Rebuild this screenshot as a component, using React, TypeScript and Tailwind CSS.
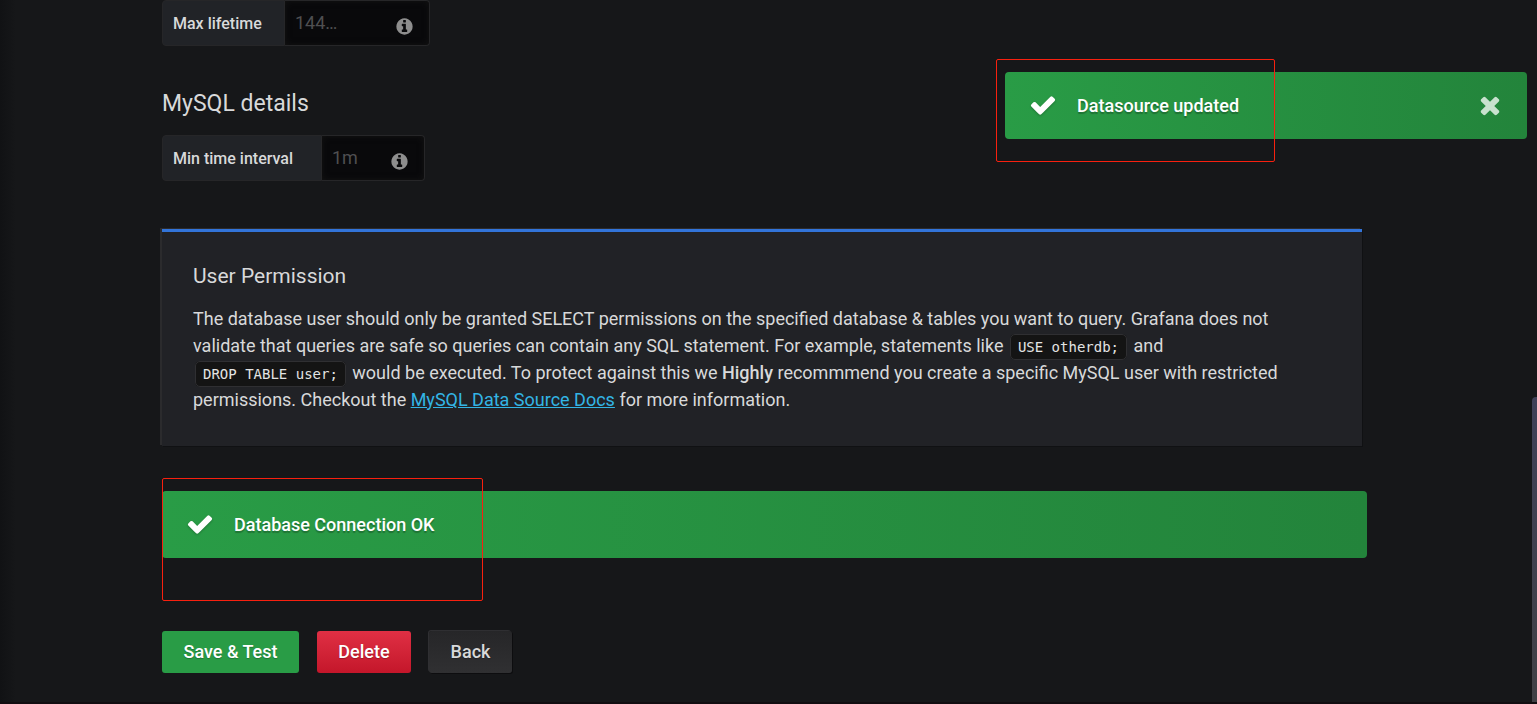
import React from "react";

type IconProps = { className?: string };

const CheckIcon = ({ className }: IconProps) => (
  <svg viewBox="0 0 1792 1792" fill="currentColor" aria-hidden="true" className={className}>
    <path d="M1671 566q0 40-28 68l-724 724-136 136q-28 28-68 28t-68-28l-136-136-362-362q-28-28-28-68t28-68l136-136q28-28 68-28t68 28l294 295 656-657q28-28 68-28t68 28l136 136q28 28 28 68z" />
  </svg>
);

const CloseIcon = ({ className }: IconProps) => (
  <svg viewBox="0 0 1792 1792" fill="currentColor" aria-hidden="true" className={className}>
    <path d="M1490 1322q0 40-28 68l-136 136q-28 28-68 28t-68-28l-294-294-294 294q-28 28-68 28t-68-28l-136-136q-28-28-28-68t28-68l294-294-294-294q-28-28-28-68t28-68l136-136q28-28 68-28t68 28l294 294 294-294q28-28 68-28t68 28l136 136q28 28 28 68t-28 68l-294 294 294 294q28 28 28 68z" />
  </svg>
);

const InfoIcon = ({ className }: IconProps) => (
  <svg viewBox="0 0 1792 1792" fill="currentColor" aria-hidden="true" className={className}>
    <path d="M1152 1376v-160q0-14-9-23t-23-9h-96v-512q0-14-9-23t-23-9h-320q-14 0-23 9t-9 23v160q0 14 9 23t23 9h96v320h-96q-14 0-23 9t-9 23v160q0 14 9 23t23 9h448q14 0 23-9t9-23zm-128-896v-160q0-14-9-23t-23-9h-192q-14 0-23 9t-9 23v160q0 14 9 23t23 9h192q14 0 23-9t9-23zm640 416q0 209-103 385.5t-279.5 279.5-385.5 103-385.5-103-279.5-279.5-103-385.5 103-385.5 279.5-279.5 385.5-103 385.5 103 279.5 279.5 103 385.5z" />
  </svg>
);

type FieldProps = {
  id: string;
  label: string;
  placeholder: string;
  labelClass: string;
  inputClass: string;
};

const Field = ({ id, label, placeholder, labelClass, inputClass }: FieldProps) => (
  <div className="flex h-[46px]">
    <label
      htmlFor={id}
      className={`flex items-center rounded-l border border-[#262628] bg-[#212327] pt-[2px] pl-[10px] text-base font-medium text-[#d8d9da] ${labelClass}`}
    >
      {label}
    </label>
    <div className={`relative ${inputClass}`}>
      <input
        id={id}
        type="text"
        placeholder={placeholder}
        className="h-full w-full rounded-r border border-l-0 border-[#262628] bg-[#09090b] pr-10 pb-[2px] pl-[10px] text-lg text-[#d8d9da] shadow-[inset_0_0_6px_#141414] outline-none placeholder:text-[#4f4f51]"
      />
      <InfoIcon className="absolute top-[17px] right-4 size-[19px] text-[#8e8e8e]" />
    </div>
  </div>
);

const Code = ({ children }: { children: React.ReactNode }) => (
  <code className="mx-[2px] rounded-[5px] border border-[#2f2f32] bg-[#141414] px-[7px] py-1 align-baseline font-['DejaVu_Sans_Mono',monospace] text-sm whitespace-nowrap text-[#e3e3e3]">
    {children}
  </code>
);

type AlertProps = { title: string; onClose?: () => void };

const Alert = ({ title, onClose }: AlertProps) => (
  <div
    role="status"
    className="flex h-[67px] items-center rounded bg-linear-to-r from-[#299c46] to-[#23843b] pr-[23px] pl-6 text-white [text-shadow:0_2px_1px_rgba(0,0,0,0.25)]"
  >
    <CheckIcon className="mb-[2px] size-7 drop-shadow-[0_1px_1px_rgba(0,0,0,0.25)]" />
    <div className="ml-5 flex-1 text-lg font-medium">{title}</div>
    {onClose && (
      <button type="button" aria-label="Close" onClick={onClose} className="mb-[2px] text-[#c8e1ce]">
        <CloseIcon className="size-7" />
      </button>
    )}
  </div>
);

export default function App() {
  const [toast, setToast] = React.useState(true);
  const button = "flex h-[42px] items-center justify-center rounded-[3px] text-lg font-medium [text-shadow:0_1px_1px_rgba(0,0,0,0.25)]";

  return (
    <div className="relative min-h-screen overflow-hidden border-b-2 border-[#120d11] bg-[#161719] font-[Roboto,sans-serif] text-[#d8d9da]">
      <div className="absolute inset-y-0 left-0 w-4 bg-linear-to-r from-[#111214] to-[#161719]" />

      <main className="relative pr-[170px] pb-[29px] pl-[162px]">
        <Field id="max-lifetime" label="Max lifetime" placeholder="144…" labelClass="w-[123px]" inputClass="w-[145px]" />

        <h3 className="mt-[42px] text-[23px] leading-8">MySQL details</h3>
        <div className="mt-[15px]">
          <Field id="min-interval" label="Min time interval" placeholder="1m" labelClass="w-[160px]" inputClass="w-[103px]" />
        </div>

        <section className="mt-12 mr-[5px] border-t-[3px] border-[#3274d9] bg-[#212226] pt-[29px] pr-[60px] pb-[33px] pl-[31px] shadow-[-2px_-1px_0_0_#2b2b2d,1px_1px_0_0_#101113]">
          <h5 className="text-[21px] leading-[30px]">User Permission</h5>
          <p className="mt-[14px] text-lg leading-[27px]">
            The database user should only be granted SELECT permissions on the specified database &amp; tables you want
            to query. Grafana does not validate that queries are safe so queries can contain any SQL statement. For
            example, statements like <Code>USE otherdb;</Code> and <Code>DROP TABLE user;</Code> would be executed. To
            protect against this we <strong className="font-medium">Highly</strong> recommmend you create a specific
            MySQL user with restricted permissions. Checkout the{" "}
            <a href="#docs" className="text-[#33b5e5] underline">
              MySQL Data Source Docs
            </a>{" "}
            for more information.
          </p>
        </section>

        <div className="relative mt-[45px]">
          <Alert title="Database Connection OK" />
          <div className="pointer-events-none absolute -top-[13px] left-0 h-[123px] w-[321px] rounded-[2px] border border-[#f8200f]" />
        </div>

        <div className="mt-[73px] flex">
          <button type="button" className={`${button} w-[137px] bg-[#299c46] text-white`}>
            Save &amp; Test
          </button>
          <button type="button" className={`${button} ml-[18px] w-[94px] bg-linear-to-b from-[#e02f44] to-[#c4162a] text-white`}>
            Delete
          </button>
          <button
            type="button"
            className={`${button} ml-[18px] w-[83px] bg-linear-to-b from-[#262628] to-[#303032] text-[#d8d9da] shadow-[-1px_-1px_0_0_#2f2f32,1px_1px_0_0_#0d0d0f]`}
          >
            Back
          </button>
        </div>
      </main>

      {toast && (
        <div className="absolute top-[72px] right-[10px] w-[522px]">
          <Alert title="Datasource updated" onClose={() => setToast(false)} />
          <div className="pointer-events-none absolute -top-[13px] -left-[9px] h-[103px] w-[279px] rounded-[2px] border border-[#f8200f]" />
        </div>
      )}

      <div className="absolute top-[397px] right-0 bottom-0 w-[5px] rounded-tl bg-linear-to-b from-[#3f4058] to-[#404045]" />
    </div>
  );
}
